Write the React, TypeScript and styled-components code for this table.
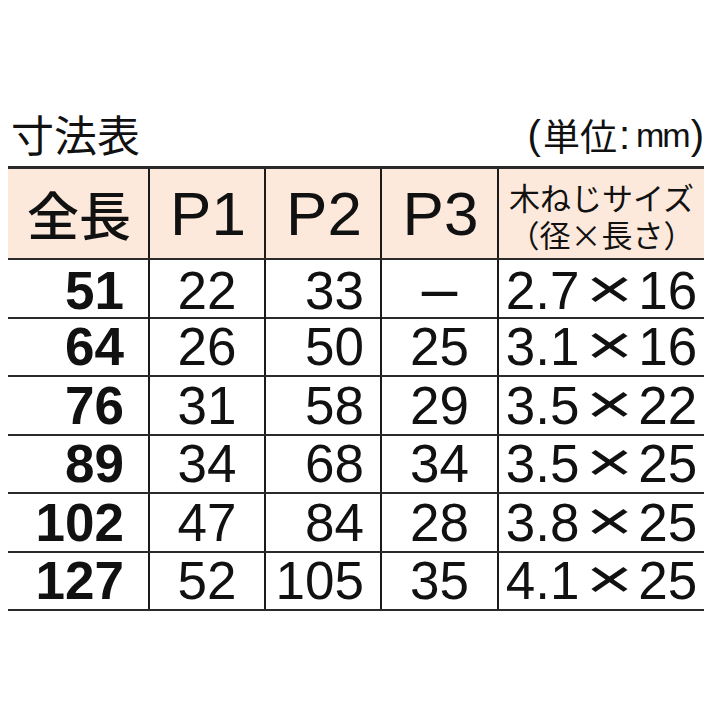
import React from "react";
import styled, { createGlobalStyle } from "styled-components";

const GlobalStyle = createGlobalStyle`
  html, body {
    margin: 0;
    padding: 0;
    background: #ffffff;
  }
  body {
    font-family: "Liberation Sans", Arial, "Noto Sans CJK JP", sans-serif;
    color: #111;
  }
`;

type Row = {
  total: string;
  p1: string;
  p2: string;
  p3: string;
  dia: string;
  len: string;
};

const rows: Row[] = [
  { total: "51", p1: "22", p2: "33", p3: "–", dia: "2.7", len: "16" },
  { total: "64", p1: "26", p2: "50", p3: "25", dia: "3.1", len: "16" },
  { total: "76", p1: "31", p2: "58", p3: "29", dia: "3.5", len: "22" },
  { total: "89", p1: "34", p2: "68", p3: "34", dia: "3.5", len: "25" },
  { total: "102", p1: "47", p2: "84", p3: "28", dia: "3.8", len: "25" },
  { total: "127", p1: "52", p2: "105", p3: "35", dia: "4.1", len: "25" },
];

const Page = styled.div`
  padding: 0 9px 0 8px;
  width: 696px;
`;

const TitleBar = styled.div`
  height: 166px;
  display: flex;
  justify-content: space-between;
  align-items: flex-end;
  padding-bottom: 11px;
  box-sizing: border-box;
`;

const Title = styled.h1`
  margin: 0 0 0 3px;
  font-family: "Noto Sans CJK JP", sans-serif;
  font-weight: 400;
  font-size: 43px;
  line-height: 1;
`;

const Unit = styled.div`
  font-family: "Noto Sans CJK JP", sans-serif;
  font-size: 37px;
  line-height: 1;
  display: flex;
  align-items: center;
  margin-right: -2px;
`;

const Paren = styled.span`
  font-family: "Liberation Sans", sans-serif;
  font-size: 40px;
  margin: 0 2px;
`;

const Mm = styled.span`
  font-family: "Liberation Sans", sans-serif;
  font-size: 34px;
  letter-spacing: -2px;
  margin-left: 4px;
`;

const Table = styled.div`
  border-top: 3px solid #2a2a2a;
`;

const Line = styled.div<{ $head?: boolean }>`
  display: grid;
  grid-template-columns: 140px 116px 116px 117px 1fr;
  height: ${(p) => (p.$head ? "89px" : "56.5px")};
  background: ${(p) => (p.$head ? "#fce9dc" : "#fff")};
  border-bottom: 2.5px solid #2a2a2a;
`;

const Cell = styled.div<{ $align?: "left" | "center" | "right"; $bold?: boolean }>`
  display: flex;
  align-items: center;
  justify-content: ${(p) =>
    p.$align === "right" ? "flex-end" : p.$align === "left" ? "flex-start" : "center"};
  padding: 0 ${(p) => (p.$align === "right" ? "16px" : "0")} 0 0;
  font-size: 53px;
  font-weight: ${(p) => (p.$bold ? 700 : 400)};
  line-height: 1;
  & + & {
    border-left: 2px solid #1a1a1a;
  }
`;

const FirstCell = styled(Cell)`
  padding-right: 24px;
`;

const HeadJa = styled.span`
  font-family: "Noto Sans CJK JP", sans-serif;
  font-size: 52px;
  font-weight: 500;
  margin-left: 2px;
`;

const HeadP = styled.span`
  font-size: 62px;
  margin-left: 2px;
`;

const HeadSmall = styled.div`
  font-family: "Noto Sans CJK JP", sans-serif;
  font-size: 31px;
  line-height: 37px;
  text-align: center;
  margin-top: 2px;
`;

const Dash = styled.span`
  font-size: 64px;
  font-weight: 400;
  margin-top: -4px;
`;

const Times = styled.span`
  display: inline-block;
  font-size: 56px;
  transform: scaleX(1.45);
  margin: -3px 13px 0 13px;
`;

export default function App() {
  return (
    <>
      <GlobalStyle />
      <Page>
        <TitleBar>
          <Title>寸法表</Title>
          <Unit>
            <Paren>(</Paren>単位<Paren>:</Paren>
            <Mm>mm</Mm>
            <Paren>)</Paren>
          </Unit>
        </TitleBar>
        <Table>
          <Line $head>
            <Cell>
              <HeadJa>全長</HeadJa>
            </Cell>
            <Cell>
              <HeadP>P1</HeadP>
            </Cell>
            <Cell>
              <HeadP>P2</HeadP>
            </Cell>
            <Cell>
              <HeadP>P3</HeadP>
            </Cell>
            <Cell>
              <HeadSmall>
                木ねじサイズ
                <br />
                （径×長さ）
              </HeadSmall>
            </Cell>
          </Line>
          {rows.map((r) => (
            <Line key={r.total}>
              <FirstCell $align="right" $bold>
                {r.total}
              </FirstCell>
              <Cell>{r.p1}</Cell>
              <Cell $align="right">{r.p2}</Cell>
              <Cell>{r.p3 === "–" ? <Dash>–</Dash> : r.p3}</Cell>
              <Cell>
                {r.dia}
                <Times>×</Times>
                {r.len}
              </Cell>
            </Line>
          ))}
        </Table>
      </Page>
    </>
  );
}
